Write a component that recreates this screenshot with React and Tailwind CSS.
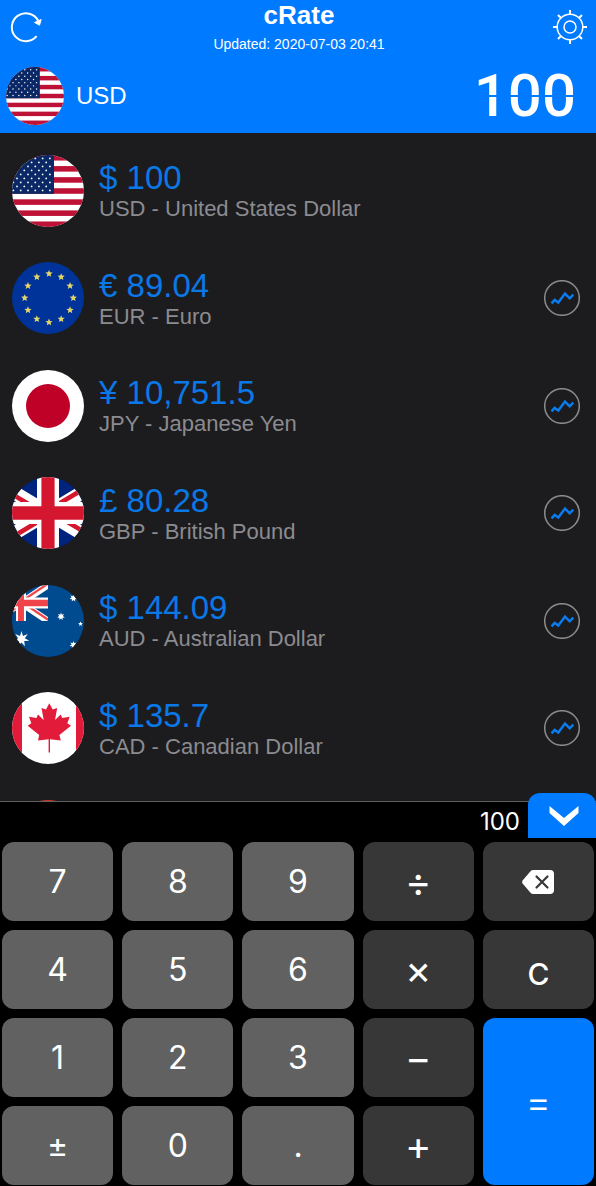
import React from 'react';

function starPoints(cx, cy, outer, inner, spikes) {
  return Array.from({ length: spikes * 2 }, (_, i) => {
    const r = i % 2 === 0 ? outer : inner;
    const a = (Math.PI * i) / spikes - Math.PI / 2;
    return `${(cx + r * Math.cos(a)).toFixed(2)},${(cy + r * Math.sin(a)).toFixed(2)}`;
  }).join(' ');
}

function FlagUS() {
  const stripes = [...Array(13)].map((_, i) => i);
  const starRows = [...Array(9)].map((_, i) => i);
  return (
    <svg viewBox="0 0 72 72" className="size-full">
      <rect width="72" height="72" fill="#fff" />
      {stripes.map((i) => i % 2 === 0 && (
        <rect key={i} y={i * 5.54} width="72" height="5.54" fill="#bd1136" />
      ))}
      <rect width="42" height="38.8" fill="#0a2866" />
      {starRows.map((row) =>
        [0, 1, 2, 3, 4, 5].map((col) => (
          <circle key={`${row}-${col}`} cx={(row % 2 ? -2.3 : 1.4) + col * 7.3} cy={3.4 + row * 4} r="0.9" fill="#fff" />
        ))
      )}
    </svg>
  );
}

function FlagEU() {
  return (
    <svg viewBox="0 0 72 72" className="size-full">
      <rect width="72" height="72" fill="#003399" />
      {[...Array(12)].map((_, i) => {
        const a = (Math.PI * i) / 6;
        return (
          <polygon key={i} points={starPoints(37 + 24.3 * Math.cos(a), 36 + 24.3 * Math.sin(a), 3.8, 1.7, 5)} fill="#e3d569" />
        );
      })}
    </svg>
  );
}

function FlagJP() {
  return (
    <svg viewBox="0 0 72 72" className="size-full">
      <rect width="72" height="72" fill="#fff" />
      <circle cx="36" cy="36" r="22" fill="#bf0027" />
    </svg>
  );
}

function UnionJack({ id, blue, red, ...box }) {
  return (
    <svg viewBox="0 0 60 30" preserveAspectRatio="none" {...box}>
      <clipPath id={id}>
        <path d="M30 15h30v15zv15H0zH0V0zV0h30z" />
      </clipPath>
      <rect width="60" height="30" fill={blue} />
      <path d="M0 0l60 30M60 0L0 30" stroke="#fff" strokeWidth="6" />
      <path d="M0 0l60 30M60 0L0 30" stroke={red} strokeWidth="4" clipPath={`url(#${id})`} />
      <path d="M0 15h60" stroke="#fff" strokeWidth="9.2" />
      <path d="M30 0v30" stroke="#fff" strokeWidth="11" />
      <path d="M0 15h60" stroke={red} strokeWidth="5.6" />
      <path d="M30 0v30" stroke={red} strokeWidth="6.6" />
    </svg>
  );
}

function FlagGB() {
  return (
    <svg viewBox="0 0 72 72" className="size-full">
      <UnionJack id="jack-gb" x="-24" y="0" width="120" height="72" blue="#00247d" red="#d4172f" />
    </svg>
  );
}

function FlagAU() {
  return (
    <svg viewBox="0 0 72 72" className="size-full">
      <rect width="72" height="72" fill="#004b8f" />
      <UnionJack id="jack-au" x="-18" y="0" width="54" height="36" blue="#004b8f" red="#f0444b" />
      <g fill="#fff">
        <polygon points={starPoints(9.5, 54, 8, 3.4, 7)} />
        <polygon points={starPoints(49, 31.5, 4, 1.9, 7)} />
        <polygon points={starPoints(61.5, 13, 4, 1.9, 7)} />
        <polygon points={starPoints(68.5, 39, 2.4, 1.1, 5)} />
        <polygon points={starPoints(61.5, 60, 4, 1.9, 7)} />
      </g>
    </svg>
  );
}

function FlagCA() {
  return (
    <svg viewBox="0 0 72 72" className="size-full">
      <rect width="72" height="72" fill="#fff" />
      <rect width="10" height="72" fill="#e31b3b" />
      <rect x="64" width="8" height="72" fill="#e31b3b" />
      <path
        fill="#e31b3b"
        d="M37.3 11.3 34 17.6 29.5 16 31.7 28 26 22.6 24.5 26 17 24.7 19.3 31.3 15.7 33.7 27.2 43 26 48.4 36.6 47.2V60.4H38V47.2L48.8 48.4 47.4 43 59 33.7 55.3 31.3 57.7 24.7 50.2 26 48.7 22.6 43 28 45.2 16 40.7 17.6Z"
      />
    </svg>
  );
}

function FlagCN() {
  return (
    <svg viewBox="0 0 72 72" className="size-full">
      <rect width="72" height="72" fill="#d8362a" />
    </svg>
  );
}

const currencies = [
  { code: 'USD', name: 'United States Dollar', symbol: '$', amount: '100', Flag: FlagUS, base: true },
  { code: 'EUR', name: 'Euro', symbol: '€', amount: '89.04', Flag: FlagEU },
  { code: 'JPY', name: 'Japanese Yen', symbol: '¥', amount: '10,751.5', Flag: FlagJP },
  { code: 'GBP', name: 'British Pound', symbol: '£', amount: '80.28', Flag: FlagGB },
  { code: 'AUD', name: 'Australian Dollar', symbol: '$', amount: '144.09', Flag: FlagAU },
  { code: 'CAD', name: 'Canadian Dollar', symbol: '$', amount: '135.7', Flag: FlagCA },
];

const BackspaceIcon = () => (
  <svg viewBox="0 0 32 24" className="h-6 w-8">
    <path d="M11 0H28Q32 0 32 4V20Q32 24 28 24H11Q9.6 24 8.5 22.8L.8 13.8Q-.5 12 .8 10.2L8.5 1.2Q9.6 0 11 0Z" fill="#fff" />
    <path d="M14.5 6.5l11 11M25.5 6.5l-11 11" stroke="#373737" strokeWidth="2.2" strokeLinecap="round" />
  </svg>
);

const keys = [
  { label: '7' }, { label: '8' }, { label: '9' }, { label: '÷', kind: 'op' }, { label: 'Backspace', kind: 'icon', icon: <BackspaceIcon /> },
  { label: '4' }, { label: '5' }, { label: '6' }, { label: '×', kind: 'op' }, { label: 'C', kind: 'clear' },
  { label: '1' }, { label: '2' }, { label: '3' }, { label: '−', kind: 'op' }, { label: '=', kind: 'equals' },
  { label: '±' }, { label: '0' }, { label: '.' }, { label: '+', kind: 'op' },
];

const keyStyles = {
  digit: 'bg-[#616161] pt-px text-[32px]',
  op: 'bg-[#373737] pt-px text-[40px]',
  clear: 'bg-[#373737] pt-2 text-3xl font-medium',
  icon: 'bg-[#373737]',
  equals: 'row-span-2 bg-[#007aff] text-[40px] font-light',
};

function Header() {
  return (
    <header className="bg-[#007aff] text-white">
      <div className="flex items-center justify-between pl-[10px] pr-2">
        <button type="button" aria-label="Refresh" className="w-9">
          <svg viewBox="0 0 32 32" className="size-8" fill="none">
            <path d="M28.4 10A14 14 0 1 0 26.6 25.2" stroke="#fff" strokeWidth="2" />
            <path d="M24.5 11.5 31.2 8.5 29.5 14.2Z" fill="#fff" stroke="#fff" strokeLinejoin="round" />
          </svg>
        </button>
        <div className="text-center">
          <h1 className="text-[26px] leading-[30px] font-bold">cRate</h1>
          <p className="mt-1 text-sm leading-5">Updated: 2020-07-03 20:41</p>
        </div>
        <button type="button" aria-label="Settings">
          <svg viewBox="0 0 36 36" className="size-9" fill="none" stroke="#fff" strokeWidth="1.5">
            <circle cx="18" cy="18" r="12.8" />
            <circle cx="18" cy="18" r="6" />
            {[0, 45, 90, 135, 180, 225, 270, 315].map((deg) => (
              <path key={deg} d="M18 5V1" strokeWidth="2" transform={`rotate(${deg} 18 18)`} />
            ))}
          </svg>
        </button>
      </div>

      <div className="flex h-[79px] items-center justify-between pt-1 pr-5 pl-[6px]">
        <button type="button" className="flex items-center gap-3">
          <span className="size-[58px] overflow-hidden rounded-full"><FlagUS /></span>
          <span className="text-2xl">USD</span>
        </button>
        {/* thin gap across the middle, like the segments of an lcd */}
        <output className="bg-[linear-gradient(#fff_49%,transparent_49%,transparent_52%,#fff_52%)] bg-clip-text font-[Roboto,sans-serif] text-[60px] leading-[70px] font-medium text-transparent">
          100
        </output>
      </div>
    </header>
  );
}

function CurrencyRow({ currency }) {
  const { code, name, symbol, amount, Flag, base } = currency;
  return (
    <li className="flex flex-1 items-center pr-4 pl-3">
      <span className="size-[72px] shrink-0 overflow-hidden rounded-full"><Flag /></span>
      <div className="ml-[15px] flex-1 pt-px">
        <p className="text-[33px] leading-9 text-[#0a78e6]">{symbol} {amount}</p>
        <p className="text-[22px] leading-[26px] text-[#8b8b90]">{code} - {name}</p>
      </div>
      {!base && (
        <button type="button" aria-label={`${code} chart`} className="size-9">
          <svg viewBox="0 0 36 36" className="size-9" fill="none">
            <circle cx="18" cy="18" r="17.3" stroke="#8a8a8a" strokeWidth="1.5" />
            <path d="M7.5 23.4 10.7 20 14.3 22.6 21 13.6 25.7 18.3 29.3 14.7" stroke="#0a7cf0" strokeWidth="2.5" />
          </svg>
        </button>
      )}
    </li>
  );
}

function Keypad() {
  return (
    <section className="border-t border-[#606060] bg-black font-[Inter,sans-serif] text-white">
      <div className="flex h-10 items-end justify-end gap-2">
        <output className="self-center text-2xl">100</output>
        <button type="button" aria-label="Hide keypad" className="mb-1 flex h-[45px] w-[68px] items-center justify-center rounded-t-xl bg-[#007aff]">
          <svg viewBox="0 0 30 20" className="ml-1 h-5 w-[30px]">
            <path d="M.5 0 15 12 29.5 0V7L15 20 .5 7Z" fill="#fff" />
          </svg>
        </button>
      </div>
      <div className="grid auto-rows-[79px] grid-cols-5 gap-[9px] px-[2px] pb-px">
        {keys.map(({ label, kind = 'digit', icon }) => (
          <button
            key={label}
            type="button"
            aria-label={icon ? label : undefined}
            className={`flex items-center justify-center rounded-xl leading-10 ${keyStyles[kind]}`}
          >
            {icon || label}
          </button>
        ))}
      </div>
    </section>
  );
}

export default function App() {
  return (
    <div className="flex h-screen flex-col bg-[#1c1c1e] font-['Liberation_Sans',Arial,sans-serif]">
      <Header />
      <main className="min-h-0 flex-1 overflow-hidden">
        <ul className="flex h-full flex-col pt-1">
          {currencies.map((currency) => (
            <CurrencyRow key={currency.code} currency={currency} />
          ))}
          {/* next row peeks out above the keypad */}
          <li className="flex h-[19px] shrink-0 items-start pt-[18px] pl-3">
            <span className="size-[72px] shrink-0 overflow-hidden rounded-full"><FlagCN /></span>
          </li>
        </ul>
      </main>
      <Keypad />
    </div>
  );
}
